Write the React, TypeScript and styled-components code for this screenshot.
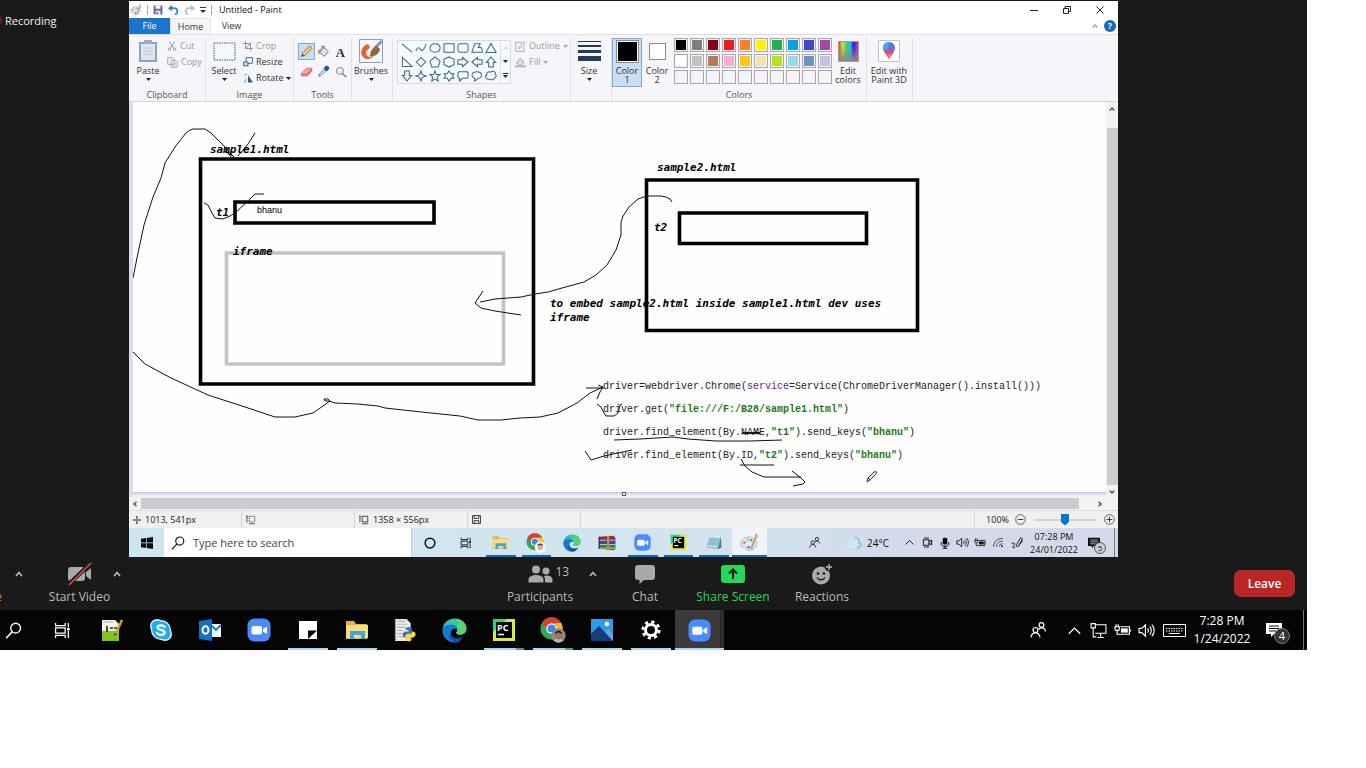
import React from "react";
import styled, { createGlobalStyle, css } from "styled-components";

const GlobalStyle = createGlobalStyle`
  * { box-sizing: border-box; }
  body { margin: 0; background: #fff; font-family: "Open Sans", "Noto Sans", sans-serif; }
  button, input { font: inherit; color: inherit; margin: 0; padding: 0; border: 0; background: none; }
  svg { display: block; flex: none; }
`;

/* ---------- host screen ---------- */
const Desktop = styled.div`padding-right: 59px;`;
const Screen = styled.main`background: #1a1a1a; min-width: 1200px;`;
const Stage = styled.div`display: grid; grid-template-columns: 129px 1fr 189px;`;
const Recording = styled.div`
  display: flex; align-items: center; gap: 3px; height: 18px; margin-top: 11px;
  font-size: 11px; color: #f0f0f0;
`;
const RecordingMark = styled.i`width: 2px; height: 8px; background: #5a1f1f; border-radius: 0 4px 4px 0;`;

/* ---------- Paint window ---------- */
const Shared = styled.section`display: flex; flex-direction: column; min-width: 0; padding-top: 1px; color: #333;`;
const TitleBar = styled.header`
  display: flex; align-items: center; height: 17px; background: #fff; font-size: 9px; color: #111;
`;
const QuickAccess = styled.div`display: flex; align-items: center; gap: 5px; margin-left: 1px;`;
const QuickButton = styled.button`display: flex; height: 14px; align-items: center;`;
const Bar = styled.i`width: 1px; height: 10px; background: #aaa;`;
const Title = styled.h1`margin: 0 0 0 7px; font-size: 9px; font-weight: 400; line-height: 14px;`;
const WindowButtons = styled.div`display: flex; margin-left: auto; padding-right: 2px;`;
const WindowButton = styled.button`width: 33px; height: 14px; display: flex; align-items: center; justify-content: center;`;

const Tabs = styled.nav`display: flex; height: 16px; background: #fff; font-size: 9px;`;
const Tab = styled.button<{ $kind?: "file" | "active" }>`
  width: 41px; line-height: 16px; text-align: center;
  ${(p) => p.$kind === "file" && css`background: #1a76cc; color: #fff;`}
  ${(p) => p.$kind === "active" && css`background: #f6f5f9; border: 1px solid #e4e3e8; border-bottom: 0; line-height: 15px;`}
`;
const TabsEnd = styled.div`display: flex; align-items: center; gap: 6px; margin-left: auto; margin-right: 2px;`;
const Help = styled.button`
  width: 12px; height: 12px; border-radius: 50%; background: #1568b8; color: #fff;
  font-size: 9px; line-height: 12px; font-weight: 700;
`;

const Ribbon = styled.div`
  display: flex; height: 68px; padding: 3px 0 0; background: #f6f5f9;
  border-top: 1px solid #e0dfe4; border-bottom: 1px solid #d6d5da; font-size: 9px; line-height: 10px;
`;
const Group = styled.section<{ $w: number }>`
  display: flex; flex-direction: column; width: ${(p) => p.$w}px; border-right: 1px solid #e2e1e6;
`;
const GroupBody = styled.div<{ $gap?: number; $pad?: number }>`
  display: flex; flex: 1; align-items: flex-start; gap: ${(p) => p.$gap ?? 6}px; padding: 0 0 0 ${(p) => p.$pad ?? 0}px;
`;
const GroupName = styled.h2`margin: 0; height: 12px; font-size: 9px; line-height: 12px; font-weight: 400; text-align: center; color: #555;`;
const BigTool = styled.button<{ $w: number; $on?: boolean }>`
  display: flex; flex-direction: column; align-items: center; width: ${(p) => p.$w}px; height: 49px;
  padding-top: 1px; gap: 3px; line-height: 9px; white-space: pre-line;
  ${(p) => p.$on && css`background: #c9def5; outline: 1px solid #7da7d9; outline-offset: -1px;`}
`;
const BigIcon = styled.span`display: flex; align-items: center; justify-content: center; height: 24px;`;
const SmallTools = styled.div`display: flex; flex-direction: column;`;
const SmallTool = styled.button<{ $off?: boolean }>`
  display: flex; align-items: center; gap: 3px; height: 16px; color: ${(p) => (p.$off ? "#9b9aa0" : "#333")};
`;
const ToolGrid = styled.div`display: grid; grid-template-columns: repeat(3, 17px); grid-auto-rows: 20px; padding-top: 5px;`;
const ToolButton = styled.button<{ $on?: boolean }>`
  display: flex; align-items: center; justify-content: center; height: 17px;
  ${(p) => p.$on && css`background: #c9def5; outline: 1px solid #7da7d9; outline-offset: -1px;`}
`;
const Gallery = styled.div`display: flex; margin-top: 2px; border: 1px solid #d5dbe4; background: #f4fafd;`;
const ShapeGrid = styled.div`display: grid; grid-template-columns: repeat(7, 14px); grid-auto-rows: 14px; padding: 0 2px;`;
const ShapeButton = styled.button`display: flex; align-items: center; justify-content: center;`;
const GalleryScroll = styled.div`
  display: flex; flex-direction: column; justify-content: space-around; align-items: center; width: 10px;
  border-left: 1px solid #dde2ea;
`;
const Swatches = styled.div`display: grid; grid-template-columns: repeat(10, 14px); gap: 2px; padding: 0 0 0 2px;`;
const Swatch = styled.button<{ $c: string }>`
  width: 14px; height: 14px; border: 1px solid #aaa9ad; background: ${(p) => p.$c}; box-shadow: inset 0 0 0 1px #f3f2f6;
`;
const ColorWell = styled.span<{ $c: string; $s: number }>`
  width: ${(p) => p.$s}px; height: ${(p) => p.$s}px; background: ${(p) => p.$c};
  border: 1px solid #8a898e; box-shadow: inset 0 0 0 1px #fff;
`;

/* ---------- drawing area ---------- */
const Workspace = styled.div`display: flex; height: 395px; background: #dcdcec; padding-left: 4px;`;
const Sheet = styled.div`position: relative; flex: 1; min-width: 0; height: 390px; background: #fefefe; overflow: hidden;`;
const SheetColumn = styled.div`display: flex; flex-direction: column; flex: 1; min-width: 0;`;
const SheetShadow = styled.div`
  display: flex; justify-content: center; height: 5px; padding-left: 9px; background: #dbe0ec;
  border-top: 1px solid #c0c9dc; border-bottom: 2px solid #eef0f6;
`;
const Handle = styled.i`width: 4px; height: 4px; margin-top: -1px; background: #fff; border: 1px solid #555;`;
const Label = styled.span<{ $x: number; $y: number; $font?: "code" | "plain" }>`
  position: absolute; left: ${(p) => p.$x}px; top: ${(p) => p.$y}px; white-space: pre; color: #000;
  font: italic 700 11px/14px "DejaVu Sans Mono", monospace;
  ${(p) => p.$font === "code" && css`font: 400 10px/14px "Liberation Mono", monospace; color: #222;`}
  ${(p) => p.$font === "plain" && css`font: 400 9px/14px "Liberation Sans", sans-serif;`}
`;
const Str = styled.b`color: #1a7a1a; font-weight: 700;`;
const Kwarg = styled.span`color: #6a1b93;`;
const VScroll = styled.div`
  display: flex; flex-direction: column; align-items: center; justify-content: space-between; width: 12px;
  padding: 4px 0 2px; background: #f3f2f5;
`;
const VThumb = styled.i`flex: 1; width: 11px; margin: 16px 0 4px; background: #cdcbcf;`;
const HScroll = styled.div`
  display: flex; align-items: center; height: 13px; padding: 0 15px 0 3px; background: #f3f2f5;
`;
const HThumb = styled.i`flex: 1; height: 11px; margin: 0 18px 0 3px; background: #cdcbcf;`;
const Status = styled.footer`
  display: flex; height: 18px; background: #f1eff2; border-top: 1px solid #dcdbe0; font-size: 9px; color: #222;
`;
const StatusCell = styled.div<{ $w?: number }>`
  display: flex; align-items: center; gap: 4px; padding-left: 4px; border-right: 1px solid #d6d5da;
  ${(p) => (p.$w ? css`width: ${p.$w}px;` : css`flex: 1;`)}
`;
const ZoomCell = styled.label`display: flex; align-items: center; gap: 6px; padding: 0 3px 0 11px;`;
const Range = styled.input`
  appearance: none; width: 62px; height: 14px; margin: 0 2px;
  &::-webkit-slider-runnable-track { height: 2px; background: #d3d2d6; }
  &::-webkit-slider-thumb {
    appearance: none; width: 8px; height: 12px; margin-top: -5px; background: #0a74d0;
    clip-path: polygon(0 0, 100% 0, 100% 70%, 50% 100%, 0 70%);
  }
`;

/* ---------- presenter's taskbar ---------- */
const InnerBar = styled.nav`
  display: flex; height: 29px; color: #111;
  background: linear-gradient(90deg, #cde7f1 0, #d3e4ee 55%, #d2daeb 80%, #d6d9ea);
`;
const InnerApps = styled.div`display: grid; grid-template-columns: repeat(8, 1fr); width: 284px; flex: none;`;
const InnerButton = styled.button<{ $w?: number; $run?: boolean; $on?: boolean }>`
  position: relative; display: flex; align-items: center; justify-content: center; flex: none;
  ${(p) => p.$w && css`width: ${p.$w}px;`}
  ${(p) => p.$on && css`background: #edf3f9;`}
  ${(p) => p.$run && css`&::after { content: ""; position: absolute; left: 3px; right: 3px; bottom: 0; height: 2px; background: #0b69b5; }`}
  ${(p) => p.$on && css`&::after { left: 0; right: 0; }`}
`;
const SearchBox = styled.label`
  display: flex; align-items: center; gap: 8px; width: 248px; padding-left: 7px; background: #fff; border-right: 1px solid #c5d0d6;
`;
const SearchInput = styled.input`
  flex: 1; min-width: 0; font-size: 11px; outline: none;
  &::placeholder { color: #444; opacity: 1; }
`;
const Tray = styled.div`display: flex; align-items: center; margin-left: auto;`;
const TrayButton = styled.button<{ $w: number }>`
  display: flex; align-items: center; justify-content: center; gap: 5px; width: ${(p) => p.$w}px; height: 100%; flex: none;
`;
const Temp = styled.span`font-size: 10px; line-height: 14px;`;
const InnerClock = styled.time`width: 54px; text-align: center; font-size: 9px; line-height: 13px; white-space: nowrap;`;
const Count = styled.span<{ $dark?: boolean }>`
  position: absolute; right: ${(p) => (p.$dark ? -8 : -6)}px; bottom: ${(p) => (p.$dark ? -6 : -5)}px; width: ${(p) => (p.$dark ? 16 : 12)}px;
  height: ${(p) => (p.$dark ? 16 : 12)}px; border-radius: 50%; text-align: center;
  font-size: ${(p) => (p.$dark ? 11 : 8)}px; line-height: ${(p) => (p.$dark ? 14 : 10)}px;
  border: 1px solid ${(p) => (p.$dark ? "#777" : "#555")}; background: ${(p) => (p.$dark ? "#333" : "#c9cfdc")};
  color: ${(p) => (p.$dark ? "#fff" : "#111")};
`;
const Badged = styled.span`position: relative; display: flex;`;

/* ---------- meeting toolbar ---------- */
const Meeting = styled.nav`
  display: grid; grid-template-columns: 1fr auto 1fr; height: 53px; padding-top: 4px; color: #b9b9b9; font-size: 12px;
`;
const MeetingGroup = styled.div<{ $center?: boolean; $end?: boolean }>`
  display: flex; align-items: flex-start;
  ${(p) => p.$center && css`padding-left: 55px;`}
  ${(p) => p.$end && css`justify-content: flex-end; padding: 9px 12px 0 0;`}
`;
const MeetingButton = styled.button<{ $w: number; $share?: boolean; $l?: number }>`
  display: flex; flex-direction: column; align-items: center; width: ${(p) => p.$w}px; flex: none;
  margin-left: ${(p) => p.$l ?? 0}px; gap: 1px;
  line-height: 18px; white-space: nowrap; ${(p) => p.$share && css`color: #23d959;`}
`;
const MuteEdge = styled.button`
  display: flex; justify-content: flex-end; width: 2px; overflow: hidden; padding-top: 27px; line-height: 18px; color: #c77d3a;
`;
const MeetingIcon = styled.span`position: relative; display: flex; align-items: center; height: 26px;`;
const People = styled.span`position: absolute; left: 28px; top: 2px; font-size: 12px; line-height: 18px;`;
const Caret = styled.button<{ $l: number }>`display: flex; width: 8px; height: 26px; align-items: center; margin-left: ${(p) => p.$l}px;`;
const Leave = styled.button`
  width: 61px; height: 27px; border-radius: 7px; background: #b92626; color: #fff; font-weight: 600; font-size: 12px;
`;

/* ---------- host taskbar ---------- */
const HostBar = styled.nav`display: flex; height: 40px; background: #050505; color: #fff;`;
const HostButton = styled.button<{ $run?: boolean; $many?: boolean; $on?: boolean; $first?: boolean }>`
  position: relative; display: flex; align-items: center; justify-content: center; width: 49px; flex: none;
  ${(p) => p.$first && css`width: 38px; justify-content: flex-start; padding-left: 5px;`}
  ${(p) => p.$run && css`&::after { content: ""; position: absolute; left: 5px; right: 4px; bottom: 0; height: 2px;
    background: ${p.$many ? "linear-gradient(90deg, #a9d9f5 80%, #6f8b9b 80%)" : "#a9d9f5"}; }`}
  ${(p) => p.$on && css`background: linear-gradient(90deg, #3b3b3b 92%, #232323 92%, #2e2e2e 94%); &::after { left: 0; right: 0; }`}
`;
const HostClock = styled.time`width: 64px; text-align: center; font-size: 12px; line-height: 18px; white-space: nowrap;`;
const ShowDesktop = styled.button<{ $l: number }>`width: 4px; height: 100%; margin-left: ${(p) => p.$l}px; border-left: 1px solid #777;`;

/* ---------- icons ---------- */
type IconProps = { s?: number; h?: number; vb?: string; children?: React.ReactNode };
const Icon = ({ s = 16, h, vb = "0 0 16 16", children }: IconProps) => (
  <svg width={s} height={h ?? s} viewBox={vb} fill="none" aria-hidden="true">{children}</svg>
);
const Down = ({ c = "#222" }: { c?: string }) => <Icon s={5} h={3} vb="0 0 5 3"><path d="M0 0h5L2.500 3z" fill={c} /></Icon>;
const Chevron = ({ d = "up", c = "#444", s = 6 }: { d?: "up" | "down" | "left" | "right"; c?: string; s?: number }) => (
  <Icon s={s} vb="0 0 8 8">
    <path stroke={c} strokeWidth="1.600" d={{ up: "M1 6l3-3.500L7 6", down: "M1 2l3 3.500L7 2", left: "M6 1L2.500 4 6 7", right: "M2 1l3.500 3L2 7" }[d]} />
  </Icon>
);
const Search = ({ s }: { s: number }) => (
  <Icon s={s}><circle cx="10" cy="5.800" r="4.600" stroke="currentColor" strokeWidth="1.300" /><path d="M6.700 9.300L1 15.300" stroke="currentColor" strokeWidth="1.400" /></Icon>
);
const TaskView = ({ s }: { s: number }) => (
  <Icon s={s}><path stroke="currentColor" strokeWidth="1.200" d="M1.500 1v2.500h9V1M1.500 15v-2.500h9V15M1.500 5.500h9v5h-9zM13.500 1v4M13.500 8.500V15" /><path fill="currentColor" d="M12.300 5.500h2.400V8h-2.400z" /></Icon>
);
const PeopleIcon = ({ s }: { s: number }) => (
  <Icon s={s}><g stroke="currentColor" strokeWidth="1.200"><circle cx="5.500" cy="8" r="2.500" /><path d="M1 15.500c.3-3 2-4.700 4.500-4.700s4.200 1.700 4.500 4.700" /><circle cx="11.500" cy="3" r="2.400" /><path d="M8.500 7.500c2.500-3 6.500-1.800 7 2" /></g></Icon>
);
const Folder = ({ s }: { s: number }) => (
  <Icon s={s} vb="0 0 24 22"><path d="M1 2h8l2 3h11v15H1z" fill="#e9b23f" /><path d="M1 6h22v13H1z" fill="#fbdc7d" /><path d="M5 12h15v8h-4v-4H9v4H5z" fill="#3ea7dc" /></Icon>
);
const Edge = ({ s }: { s: number }) => (
  <Icon s={s} vb="0 0 24 24">
    <path d="M.5 11C1.200 4.500 6 .5 12 .5c7 0 11.500 4.500 11.500 9.500 0 4-3 6-6.500 6-2 0-3.500-.8-3.500-1.800 0-.8 1-1 1-3C14.500 8.500 12 7 9 7 5 7 1.500 8.500.5 11z" fill="#35c1b0" />
    <path d="M14 .7c6 1 9.500 5 9.500 9.300 0 4-3 6-6.500 6-2 0-3.500-.8-3.500-1.800 2-1 2-3 1-5z" fill="#62d563" opacity=".75" />
    <path d="M.4 12C.4 8.500 4 6.500 8 6.500c3.500 0 6.500 2 6.500 4.800C13.500 9.500 8.500 9.500 8.500 15c0 5 5 7.500 9.500 6.500-2 1.500-4 2-6 2C5 23.500.4 18 .4 12z" fill="#1479d0" />
    <path d="M8.500 14c0 5 5.500 7 12 4-1 2-3.500 4.500-7 5C8 22.500 5.500 18 8.500 14z" fill="#0c4f9c" />
  </Icon>
);
const ZoomLogo = ({ s }: { s: number }) => (
  <Icon s={s} vb="0 0 24 24"><rect x=".5" y=".5" width="23" height="23" rx="7" fill="#4a8cff" /><rect x="4.500" y="8" width="10.500" height="8.500" rx="2" fill="#fff" /><path d="M16 11l4-2.500v7.500l-4-2.500z" fill="#fff" /></Icon>
);
const PyCharm = ({ s }: { s: number }) => (
  <Icon s={s} vb="0 0 24 24">
    <path d="M1 1h22v22H1z" fill="#d8ea3a" /><path d="M1 1h14L1 14z" fill="#21d789" /><path d="M4 4h16v16H4z" fill="#000" />
    <text x="5" y="13" fontSize="9" fontWeight="700" fill="#fff" fontFamily="Open Sans, sans-serif">PC</text><path d="M6 16.500h6" stroke="#fff" strokeWidth="1.500" />
  </Icon>
);
const Chrome = ({ s, dark }: { s: number; dark?: boolean }) => (
  <Icon s={s} vb="0 0 26 26">
    <circle cx="11.500" cy="11.500" r="11" fill="#31a852" /><path d="M1.900 6A11 11 0 0 1 21.100 6H11.500L8 13z" fill="#e33b2e" /><path d="M21.100 6a11 11 0 0 1-9.600 16.500L17 11l-2-5z" fill="#fbc116" />
    <circle cx="11.500" cy="11.500" r="5.200" fill="#fff" /><circle cx="11.500" cy="11.500" r="4" fill="#4285f4" />
    <circle cx="18.500" cy="18.500" r="7.200" fill={dark ? "#8d8785" : "#f4f4f4"} /><path d="M13.500 23.500c1-2.500 9-2.500 10 0a7 7 0 0 1-10 0z" fill={dark ? "#b8b5b2" : "#fff"} />
    <ellipse cx="18.500" cy="18.500" rx="3.200" ry="4" fill={dark ? "#9b7360" : "#e7a985"} /><path d="M15 17.500c-.5-5 7.500-5 7 0-1-2.500-5.500-3-7 0z" fill="#161616" />
  </Icon>
);
const Speaker = ({ s }: { s: number }) => (
  <Icon s={s}><path stroke="currentColor" strokeWidth="1.100" d="M1 6h2.500L7 2.700v10.600L3.500 10H1zM9 6c1 1 1 3 0 4M11 4.200c2 2 2 5.600 0 7.600M13 2.500c3 3 3 8 0 11" /></Icon>
);
const Battery = ({ s }: { s: number }) => (
  <Icon s={s}><path stroke="currentColor" strokeWidth="1.100" d="M6 4.500h8.500v7H5M15.500 7v2M1 4.500h4v2c0 2-4 2-4 0zM2 4.500V2M4 4.500V2M3 8v3.500h2" /><path d="M6.500 6h6.500v4H6.500z" fill="currentColor" /></Icon>
);
const Note = ({ s, line }: { s: number; line: string }) => (
  <Icon s={s}><path d="M0 1h16v11H8l-3 3v-3H0z" fill="currentColor" /><path d="M3 4h10M3 6.500h10M3 9h7" stroke={line} /></Icon>
);
const Palette = ({ s }: { s: number }) => (
  <Icon s={s} vb="0 0 24 24">
    <path d="M11 5C4 5 .5 10 1 15c.4 3.500 3.500 3 5 3s1 4 5 4c6 0 10-4 10-9s-4-8-10-8z" fill="#dfe6ee" stroke="#9fb0c2" />
    <circle cx="5.500" cy="12" r="1.600" fill="#de6a4c" /><circle cx="9.500" cy="8.500" r="1.600" fill="#e0b84c" /><circle cx="14" cy="9" r="1.600" fill="#6ea85f" /><circle cx="11" cy="18" r="1.700" fill="#4b7fc4" />
    <path d="M21 2L14 20" stroke="#c39a6a" strokeWidth="2.400" /><path d="M19 1h3v6l-3-.5z" fill="#dfae72" />
  </Icon>
);
const Floppy = ({ c }: { c: string }) => (
  <Icon s={10}><path d="M1 1h14v14H1z" fill={c} /><path d="M4 1h8v5H4z" fill="#fff" /><path d="M4 9h8v6H4z" fill="#e3def3" /><path d="M6 11h2v4H6z" fill={c} /></Icon>
);

/* ---------- data ---------- */
const palette = [
  "#000000", "#7f7f7f", "#880015", "#ed1c24", "#ff7f27", "#fff200", "#22b14c", "#00a2e8", "#3f48cc", "#a349a4",
  "#ffffff", "#c3c3c3", "#b97a57", "#ffaec9", "#ffc90e", "#efe4b0", "#b5e61d", "#99d9ea", "#7092be", "#c8bfe7",
  ...Array(10).fill("#f6f5f9"),
];
const shapes: [string, string][] = [
  ["Line", "M1 2l11 9"], ["Curve", "M1 10c1-4 3-5 5-2s4 0 6-6"], ["Oval", "M1 6.500c0-6 11-6 11 0s-11 6-11 0z"], ["Rectangle", "M1 2h11v9H1z"],
  ["Rounded rectangle", "M3 2h7q2 0 2 2v5q0 2-2 2H3q-2 0-2-2V4q0-2 2-2z"], ["Polygon", "M4 2h6L8 6h3l2 5H1z"], ["Triangle", "M6.500 1.500l5.500 10H1z"],
  ["Right triangle", "M1.500 1.500v10H12z"], ["Diamond", "M6.500 1.500l5 5-5 5-5-5z"], ["Pentagon", "M6.500 1l5.500 4.500-2 6.500H3L1 5.500z"], ["Hexagon", "M6.500 1L12 3.700v5.600L6.500 12 1 9.300V3.700z"],
  ["Right arrow", "M1 4h5V1.500l6 5-6 5V9H1z"], ["Left arrow", "M12 4H7V1.500l-6 5 6 5V9h5z"], ["Up arrow", "M4 12V7H1.500l5-6 5 6H9v5z"],
  ["Down arrow", "M4 1v5H1.500l5 6 5-6H9V1z"], ["Four-point star", "M6.500 1L8 5l4 1.500L8 8l-1.500 4L5 8 1 6.500 5 5z"],
  ["Five-point star", "M6.500 1l1.500 4h4L9 7.500l1 4.500-3.500-2.500L3 12l1-4.500L1 5h4z"], ["Six-point star", "M6.500 1l2 3H12l-2 2.500L12 9H8.500l-2 3-2-3H1l2-2.500L1 4h3.500z"],
  ["Rounded callout", "M2 2h9l1 1v5l-1 1H6l-3 3V9H2L1 8V3z"], ["Oval callout", "M4 9C-1 7 1 2 6.500 2s7 6 1 7.300L4 12z"], ["Cloud callout", "M3 10C0 9 0 6 2 5.500 1 3 4 1 6 2.500 8 0 12 2 11 4.500c2 1.500 1 4-1 4.500-1 2-3 2-4.500 1z"],
];
const strokes = [
  "M133 278L138 253 144 225 153 197 161 178 165 163 175 147 186 133Q189 130 193 129H205L211 133 225 147 234 157",
  "M255 133L248 144 238 156M225 149L231 157M224 151L233 156",
  "M204 203L208 205 212 213 215 218 223 219 230 216 235 213 248 201 255 194H264",
  "M672 202L670 199 666 197 661 196H647L638 199 629 207 623 216 621 222V235L619 241 616 250 607 265 596 275 584 282 562 288 548 292 535 294 521 297 495 299 485 301 480 302",
  "M483 291L475 303 481 308 495 311 521 315",
  "M133 352L145 364 171 378 208 395 245 407 275 417 295 417 313 413 323 406 330 401 328 399H324L325 401 329 401 335 403 358 404 378 406 385 408 431 413 460 416 478 420H501L520 418 540 417 558 413 577 403 590 393 603 387",
  "M586 388H604M597 399L600 392 603 387 598 385",
  "M597 404L601 407 604 413 606 416H614L618 413 620 405 622 404",
  "M614 440L640 439 673 437 688 439 716 441H750L782 440",
  "M585 451L591 460 604 456 618 453 632 450",
  "M740 465H774M741 459L745 466 752 472 764 477H801",
  "M792 471L801 478 805 482 803 484 793 486",
];

const innerApps: [string, React.ReactNode, boolean, boolean?][] = [
  ["File Explorer", <Folder s={17} />, true],
  ["Chrome", <Chrome s={20} />, true],
  ["Edge", <Edge s={18} />, false],
  ["WinRAR", <Icon s={18}><path d="M1 2.500l13-1 1.500 2V6H1z" fill="#8b2c55" /><path d="M1 6h14.500v3.500H1z" fill="#3d4796" /><path d="M1 9.500h14.500V13L14 14.500 1 13z" fill="#3c7a42" /><path d="M1 5.500h14M1 9.300h14M1 12.500h14" stroke="#e0d9ce" strokeWidth=".7" /><path d="M8 1.500h2v13H8z" fill="#c98d3a" /><path d="M1 2.500V13" stroke="#222" /></Icon>, false],
  ["Zoom", <ZoomLogo s={17} />, true],
  ["PyCharm", <PyCharm s={17} />, true],
  ["Notepad", <Icon s={17}><path d="M5 1l10 1-3 12-11-1z" fill="#8cc3cf" /><path d="M5 1l10 1-.5 2L4.300 3z" fill="#d7eef2" /><path d="M15 2l.5 11L12 14z" fill="#587a86" /><path d="M2 11l9 1" stroke="#d9f0f4" /></Icon>, true],
  ["Paint", <Palette s={19} />, true, true],
];

const hostApps: [string, React.ReactNode, { run?: boolean; many?: boolean; on?: boolean }][] = [
  ["Notepad++", <Icon s={24} vb="0 0 24 24"><path d="M2 2h13l4 4v17H2z" fill="#f4f8e8" /><path d="M2 13h17v10H2z" fill="#7cc522" /><path d="M3 4h10" stroke="#9ab" /><path d="M7 8v6M10 10h3M14 10h3" stroke="#222" strokeWidth="1.600" /><path d="M22 2l-6 13" stroke="#d49a34" strokeWidth="2.600" /><path d="M15 15l-1 3 3-2z" fill="#333" /></Icon>, {}],
  ["Skype", <Icon s={24} vb="0 0 24 24"><circle cx="8" cy="8" r="7" fill="#e9f8ff" /><circle cx="16" cy="16" r="7" fill="#e9f8ff" /><circle cx="12" cy="12" r="10" fill="#e9f8ff" /><circle cx="8" cy="8" r="5.600" fill="#1eaeea" /><circle cx="16" cy="16" r="5.600" fill="#1eaeea" /><circle cx="12" cy="12" r="8.800" fill="#1eaeea" /><path d="M15.500 9c-1-2-7-2.300-7 .5 0 3 7.200 1.800 7.200 5 0 3-6.600 3-7.700.3" stroke="#fff" strokeWidth="2.200" strokeLinecap="round" /></Icon>, {}],
  ["Outlook", <Icon s={24} vb="0 0 24 24"><path d="M12 6h11v13H12z" fill="#f4f9ff" /><path d="M14 8l4 4 5-5" stroke="#1b74c5" strokeWidth="1.800" /><path d="M1 3l13-2v22L1 21z" fill="#1270c4" /><ellipse cx="7.500" cy="12" rx="3" ry="3.800" stroke="#fff" strokeWidth="2" /></Icon>, {}],
  ["Zoom", <ZoomLogo s={24} />, {}],
  ["Sticky Notes", <Icon s={18} vb="0 0 18 18"><path d="M0 0h18v18H0z" fill="#fff" /><path d="M9 18V9.500h9z" fill="#050505" /></Icon>, { run: true }],
  ["File Explorer", <Folder s={24} />, { run: true }],
  ["Python", <Icon s={25} vb="0 0 24 24"><path d="M2 1h11l4 4v17H2z" fill="#ececec" /><path d="M4 3h8M4 6h10M4 9h8M4 12h6M4 15h6M4 18h6" stroke="#b5b5b5" /><path d="M2 2v20" stroke="#444" strokeDasharray="1 1" strokeWidth="1.500" /><path d="M12 11c0-3 6-3 6 0v3c0 2-6 1-6 3v2c-4 0-3-6 0-6h3v-1z" fill="#3a77ab" /><path d="M18 13c5-1 5 6 0 6h-2v1h2c0 4-6 3-6 0v-2c0-3 6-1 6-4z" fill="#ffd43d" /></Icon>, {}],
  ["Edge", <Edge s={25} />, {}],
  ["PyCharm", <PyCharm s={24} />, { run: true, many: true }],
  ["Chrome", <Chrome s={26} dark />, { run: true, many: true }],
  ["Photos", <Icon s={24} vb="0 0 24 24"><path d="M1 1h22v22H1z" fill="#2f9be6" /><path d="M13 17l5-6 5 6v6H11z" fill="#6fa2e2" /><path d="M1 16l8-8 14 15H1z" fill="#173c7d" /><circle cx="17" cy="6" r="2.300" fill="#fff" /></Icon>, { run: true }],
  ["Settings", <Icon s={20} vb="0 0 20 20"><circle cx="10" cy="10" r="5.500" stroke="#fff" strokeWidth="3" /><circle cx="10" cy="10" r="8.200" stroke="#fff" strokeWidth="2.800" strokeDasharray="3.200 3.240" /></Icon>, { run: true }],
  ["Zoom Meeting", <ZoomLogo s={23} />, { run: true, on: true }],
];

/* ---------- sections ---------- */
const PaintRibbon = () => (
  <Ribbon>
    <Group $w={77}>
      <GroupBody $gap={5} $pad={5}>
        <BigTool $w={28}><BigIcon><Icon s={20} h={24} vb="0 0 20 24"><path d="M1 3h18v20H1z" fill="#8ba2c2" /><path d="M3 5h14v16H3z" fill="#dde7f3" /><path d="M6 1h8v4H6z" fill="#9caec4" /><path d="M5 9h10M5 12h10M5 15h10" stroke="#b9c8dc" /></Icon></BigIcon>Paste<Down /></BigTool>
        <SmallTools>
          <SmallTool $off><Icon s={10}><path d="M4 1l6 10M12 1L6 11" stroke="#8d98a8" strokeWidth="1.500" /><circle cx="4" cy="13" r="2" stroke="#8d98a8" strokeWidth="1.500" /><circle cx="12" cy="13" r="2" stroke="#8d98a8" strokeWidth="1.500" /></Icon>Cut</SmallTool>
          <SmallTool $off><Icon s={11}><path d="M1 1h7l2 2v8H1zM6 5h7l2 2v8H6z" fill="#eef1f7" stroke="#a3b1cb" strokeWidth="1.400" /><path d="M8 9h5M8 12h5" stroke="#a3b1cb" /></Icon>Copy</SmallTool>
        </SmallTools>
      </GroupBody>
      <GroupName>Clipboard</GroupName>
    </Group>
    <Group $w={88}>
      <GroupBody $gap={5} $pad={4}>
        <BigTool $w={28}><BigIcon><Icon s={23} h={19} vb="0 0 23 19"><path d="M1 1h21v17H1z" stroke="#33597c" strokeDasharray="1.500 1" fill="#f4f7fb" /></Icon></BigIcon>Select<Down /></BigTool>
        <SmallTools>
          <SmallTool $off><Icon s={10}><path d="M4 0v12h12M0 4h12v12M4 12l9-9" stroke="#8694a8" strokeWidth="1.500" /></Icon>Crop</SmallTool>
          <SmallTool><Icon s={10}><path d="M5 1h10v9H5z" fill="#fff" stroke="#2a5f93" strokeWidth="1.500" /><path d="M1 8h7v6H1z" fill="#cfe3f5" stroke="#2a5f93" strokeWidth="1.500" /></Icon>Resize</SmallTool>
          <SmallTool><Icon s={10}><path d="M8 3v12h8z" fill="#2a5f93" /><path d="M6 7v8H0z" fill="#a7c6e2" /><path d="M2 5c1-3 4-3 5-3" stroke="#2a5f93" /></Icon>Rotate <Down /></SmallTool>
        </SmallTools>
      </GroupBody>
      <GroupName>Image</GroupName>
    </Group>
    <Group $w={58}>
      <GroupBody $pad={4}>
        <ToolGrid>
          <ToolButton $on aria-label="Pencil"><Icon s={13}><path d="M2 14l1-4L12 1l3 3-9 9z" fill="#f5c874" stroke="#8a6231" /><path d="M2 14l1-3 2 2z" fill="#333" /></Icon></ToolButton>
          <ToolButton aria-label="Fill with color"><Icon s={13}><path d="M8 2l6 6-5 6-6-5z" fill="#dbe4ee" stroke="#586d88" /><path d="M6 7V1.500h3V5" stroke="#586d88" /><path d="M1 10c0-4 2-5 5-5L3 11z" fill="#e08654" /></Icon></ToolButton>
          <ToolButton aria-label="Text"><Icon s={12}><text x="1" y="14" fontSize="17" fontWeight="700" fontFamily="Liberation Serif, serif" fill="#1f2f45">A</text></Icon></ToolButton>
          <ToolButton aria-label="Eraser"><Icon s={13}><path d="M1 11l7-7h7l-6 7z" fill="#f6a3a6" stroke="#c96a70" /><path d="M1 11h8v3H1z" fill="#e37980" /><path d="M9 11l6-7v3l-6 7z" fill="#cf636c" /></Icon></ToolButton>
          <ToolButton aria-label="Color picker"><Icon s={13}><path d="M2 14l1-3 6-6 2 2-6 6z" fill="#d6e6f2" stroke="#4c6a86" /><path d="M8 4l4 4 3-3c1-2-2-5-4-4z" fill="#22598f" /></Icon></ToolButton>
          <ToolButton aria-label="Magnifier"><Icon s={12}><circle cx="6.500" cy="6.500" r="4.500" fill="#e8f1f8" stroke="#8c98a5" strokeWidth="1.600" /><path d="M10 10l5 5" stroke="#a97642" strokeWidth="2.200" /></Icon></ToolButton>
        </ToolGrid>
      </GroupBody>
      <GroupName>Tools</GroupName>
    </Group>
    <Group $w={41}>
      <GroupBody $pad={1}>
        <BigTool $w={36}><BigIcon><Icon s={24} vb="0 0 24 24"><path d="M.5.5h23v23H.5z" fill="#f4f7fa" stroke="#8ba2b4" /><path d="M9 5C3 6 0 14 4 18c4 4 9 2 11-2-4 3-8 2-8-2 0-3 3-3 4-6z" fill="#e2653a" /><path d="M23 2l-7 7" stroke="#8a96a3" strokeWidth="3" /><path d="M18 7c-4 1-7 5-7 10 5 1 9-2 10-7z" fill="#8a6a4e" /></Icon></BigIcon>Brushes<Down /></BigTool>
      </GroupBody>
    </Group>
    <Group $w={178}>
      <GroupBody $gap={4} $pad={4}>
        <Gallery>
          <ShapeGrid>
            {shapes.map(([name, d]) => (
              <ShapeButton key={name} aria-label={name}><Icon s={12} vb="0 0 13 13"><path d={d} stroke="#3c6785" strokeWidth="1.100" /></Icon></ShapeButton>
            ))}
          </ShapeGrid>
          <GalleryScroll><Chevron s={4} c="#aaa" /><Down /><Icon s={5} h={5} vb="0 0 5 5"><path d="M0 .5h5" stroke="#222" /><path d="M0 2h5L2.500 5z" fill="#222" /></Icon></GalleryScroll>
        </Gallery>
        <SmallTools>
          <SmallTool $off><Icon s={11}><path d="M1 2h9M1 2v13h12V8M5 11l1-3 7-7 2 2-7 7z" stroke="#a2a9b3" strokeWidth="1.300" /></Icon>Outline <Down c="#aaa" /></SmallTool>
          <SmallTool $off><Icon s={11}><path d="M2 8l6-6 5 6-6 5z" stroke="#8fa0bb" strokeWidth="1.300" fill="#d9e0ec" /><path d="M0 12h16v3H0z" fill="#aab8d0" /></Icon>Fill <Down c="#aaa" /></SmallTool>
        </SmallTools>
      </GroupBody>
      <GroupName>Shapes</GroupName>
    </Group>
    <Group $w={41}>
      <GroupBody $pad={3}>
        <BigTool $w={30}><BigIcon><Icon s={23} h={20} vb="0 0 23 20"><path fill="#23395d" d="M0 0h23v1H0zM0 4h23v2H0zM0 9h23v3H0zM0 15h23v5H0z" /></Icon></BigIcon>Size<Down /></BigTool>
      </GroupBody>
    </Group>
    <Group $w={255}>
      <GroupBody $gap={0}>
        <BigTool $w={30} $on><BigIcon><ColorWell $c="#000" $s={23} /></BigIcon>{"Color\n1"}</BigTool>
        <BigTool $w={30}><BigIcon><ColorWell $c="#fff" $s={17} /></BigIcon>{"Color\n2"}</BigTool>
        <Swatches>{palette.map((c, i) => <Swatch key={i} $c={c} aria-label={`Color ${c}`} />)}</Swatches>
        <BigTool $w={32}><BigIcon>
          <svg width="21" height="21" viewBox="0 0 21 21" aria-hidden="true">
            <defs>
              <linearGradient id="hue"><stop offset="0" stopColor="#d33" /><stop offset=".2" stopColor="#dd3" /><stop offset=".4" stopColor="#3d6" /><stop offset=".6" stopColor="#2bd" /><stop offset=".75" stopColor="#22d" /><stop offset="1" stopColor="#e3a" /></linearGradient>
              <linearGradient id="fade" x2="0" y2="1"><stop offset=".2" stopColor="#888" stopOpacity="0" /><stop offset="1" stopColor="#888" /></linearGradient>
            </defs>
            <path d="M.5.5h20v20H.5z" fill="url(#hue)" stroke="#999" /><path d="M1 1h19v19H1z" fill="url(#fade)" />
          </svg>
        </BigIcon>{"Edit\ncolors"}</BigTool>
      </GroupBody>
      <GroupName>Colors</GroupName>
    </Group>
    <Group $w={46}>
      <GroupBody>
        <BigTool $w={44}><BigIcon><Icon s={22} vb="0 0 22 22"><path d="M.5.5h21v21H.5z" fill="#fff" stroke="#c3c2c8" /><path d="M11 2c4 0 6 3 6 6 0 4-4 7-6 11C10 15 5 12 5 8c0-3 2-6 6-6z" fill="#6a6fe0" /><path d="M5 8c0-3 2-6 6-6l-2 9z" fill="#2fb3f0" /><path d="M6 11l5-2 5 2c-1 3-4 5-5 8-1-3-4-5-5-8z" fill="#e0487d" /><path d="M9 14h4l-2 5z" fill="#e98a2d" /></Icon></BigIcon>{"Edit with\nPaint 3D"}</BigTool>
      </GroupBody>
    </Group>
  </Ribbon>
);

const Drawing = () => (
  <Sheet>
    <svg width="973" height="390" viewBox="133 102 973 390" fill="none" role="img" aria-label="Frames sketch">
      <g stroke="#000" strokeWidth="3.600">
        <path d="M200.500 159h333v225h-333zM235 202h199v21H235zM646.500 180h271v150.500h-271zM679.500 213h187v30.500h-187z" />
        <path d="M226.500 253h277v111h-277z" stroke="#c3c3c3" />
      </g>
      <g stroke="#111" strokeWidth="1">{strokes.map((d) => <path key={d} d={d} />)}</g>
      <path d="M742 433h18" stroke="#111" strokeWidth="2" />
      <path d="M867 482l1-4 6-6 2-.5.5 2-6 6zM868 478l2.500 2" stroke="#333" fill="#eee" />
    </svg>
    <Label $x={77} $y={41}>sample1.html</Label>
    <Label $x={83} $y={104}>t1</Label>
    <Label $x={124} $y={101} $font="plain">bhanu</Label>
    <Label $x={100} $y={143}>iframe</Label>
    <Label $x={524} $y={59}>sample2.html</Label>
    <Label $x={521} $y={119}>t2</Label>
    <Label $x={417} $y={195}>{"to embed sample2.html inside sample1.html dev uses\niframe"}</Label>
    <Label $x={470} $y={278} $font="code">driver=webdriver.Chrome(<Kwarg>service</Kwarg>=Service(ChromeDriverManager().install()))</Label>
    <Label $x={470} $y={301} $font="code">driver.get(<Str>"file:///F:/B28/sample1.html"</Str>)</Label>
    <Label $x={470} $y={324} $font="code">driver.find_element(By.NAME,<Str>"t1"</Str>).send_keys(<Str>"bhanu"</Str>)</Label>
    <Label $x={470} $y={347} $font="code">driver.find_element(By.ID,<Str>"t2"</Str>).send_keys(<Str>"bhanu"</Str>)</Label>
  </Sheet>
);

const PaintWindow = () => (
  <Shared>
    <TitleBar>
      <QuickAccess>
        <Palette s={12} /><Bar />
        <QuickButton aria-label="Save"><Floppy c="#6a5aa8" /></QuickButton>
        <QuickButton aria-label="Undo"><Icon s={11}><path d="M3 6h6c6 0 6 8 1 9" stroke="#2f86cf" strokeWidth="2.600" /><path d="M0 6l6-5v10z" fill="#2f86cf" /></Icon></QuickButton>
        <QuickButton aria-label="Redo"><Icon s={11}><path d="M13 6H7C1 6 1 14 6 15" stroke="#b9c2cc" strokeWidth="2.600" /><path d="M16 6l-6-5v10z" fill="#b9c2cc" /></Icon></QuickButton>
        <QuickButton aria-label="Customize"><Icon s={6} vb="0 0 6 6"><path d="M0 .5h6" stroke="#333" /><path d="M0 3h6L3 6z" fill="#333" /></Icon></QuickButton>
        <Bar />
      </QuickAccess>
      <Title>Untitled - Paint</Title>
      <WindowButtons>
        <WindowButton aria-label="Minimize"><Icon s={8} vb="0 0 8 8"><path d="M0 4.500h8" stroke="#222" /></Icon></WindowButton>
        <WindowButton aria-label="Restore"><Icon s={8} vb="0 0 8 8"><path d="M.5 2.500h5v5h-5zM2 2V.5h5.500v5H6" stroke="#222" /></Icon></WindowButton>
        <WindowButton aria-label="Close"><Icon s={8} vb="0 0 8 8"><path d="M.5.5l7 7M7.500.5l-7 7" stroke="#222" /></Icon></WindowButton>
      </WindowButtons>
    </TitleBar>
    <Tabs>
      <Tab $kind="file">File</Tab><Tab $kind="active">Home</Tab><Tab>View</Tab>
      <TabsEnd><Chevron c="#999" /><Help aria-label="Help">?</Help></TabsEnd>
    </Tabs>
    <PaintRibbon />
    <Workspace>
      <SheetColumn><Drawing /><SheetShadow><Handle /></SheetShadow></SheetColumn>
      <VScroll><Chevron /><VThumb /><Chevron d="down" /></VScroll>
    </Workspace>
    <HScroll><Chevron d="left" /><HThumb /><Chevron d="right" /></HScroll>
    <Status>
      <StatusCell $w={113}><Icon s={8}><path d="M8 0v16M0 8h16" stroke="#333" strokeWidth="1.600" /><path d="M6 3l2-3 2 3zM6 13l2 3 2-3zM3 6L0 8l3 2zM13 6l3 2-3 2z" fill="#333" /></Icon>1013, 541px</StatusCell>
      <StatusCell $w={113}><Icon s={10}><path d="M5 2h9v9H5z" stroke="#333" strokeWidth="1.400" strokeDasharray="2 1.500" /><path d="M1.500 12V2M0 3l1.500-2L3 3M5 14h9" stroke="#333" strokeWidth="1.300" /></Icon></StatusCell>
      <StatusCell $w={113}><Icon s={10}><path d="M5 2h9v9H5z" stroke="#333" strokeWidth="1.400" /><path d="M1.500 12V2M0 3l1.500-2L3 3M5 14h10" stroke="#333" strokeWidth="1.300" /></Icon>1358 × 556px</StatusCell>
      <StatusCell $w={113}><Icon s={9}><path d="M1 1h14v14H1zM4 1v5h8V1M4 15v-5h8v5" stroke="#333" strokeWidth="1.700" /></Icon></StatusCell>
      <StatusCell />
      <ZoomCell>100%
        <Icon s={11}><circle cx="8" cy="8" r="7" stroke="#555" strokeWidth="1.300" /><path d="M4 8h8" stroke="#333" strokeWidth="1.400" /></Icon>
        <Range type="range" min={0} max={100} defaultValue={50} />
        <Icon s={11}><circle cx="8" cy="8" r="7" stroke="#555" strokeWidth="1.300" /><path d="M4 8h8M8 4v8" stroke="#333" strokeWidth="1.400" /></Icon>
      </ZoomCell>
    </Status>
    <InnerBar>
      <InnerButton $w={35} aria-label="Start"><Icon s={12}><path d="M0 2.300L6.700 1.300v6H0zM7.600 1.200L16 0v7.300H7.600zM0 8.300h6.700v6.200L0 13.600zM7.600 8.300H16V16l-8.400-1.300z" fill="#0a0a0a" /></Icon></InnerButton>
      <SearchBox><Search s={14} /><SearchInput placeholder="Type here to search" aria-label="Search" /></SearchBox>
      <InnerButton $w={36} aria-label="Cortana"><Icon s={12}><circle cx="8" cy="8" r="6.500" stroke="#111" strokeWidth="2" /></Icon></InnerButton>
      <InnerButton $w={35} aria-label="Task view"><TaskView s={12} /></InnerButton>
      <InnerApps>
        {innerApps.map(([name, icon, run, on]) => (
          <InnerButton key={name} $run={run} $on={on} aria-label={name}>{icon}</InnerButton>
        ))}
      </InnerApps>
      <Tray>
        <TrayButton $w={40} aria-label="People"><PeopleIcon s={11} /></TrayButton>
        <TrayButton $w={66}>
          <Icon s={17}><path d="M4 13c-4 0-4-5-1-5 0-5 7-6 8-2 5-1 6 7 0 7z" fill="#cfe6f4" /><path d="M9 4c3-1 5 2 4 4 3 1 2 5-2 5" stroke="#86c3e2" strokeWidth="1.500" /></Icon>
          <Temp>24°C</Temp>
        </TrayButton>
        <TrayButton $w={19} aria-label="Hidden icons"><Icon s={9} vb="0 0 9 9"><path d="M.5 6.500l4-4 4 4" stroke="#222" /></Icon></TrayButton>
        <TrayButton $w={17} aria-label="Meet now"><Icon s={11}><path d="M2 4h8v8H2zM10 7l4-2v6l-4-2M3 1.500h7M3 14.500h7" stroke="#222" strokeWidth="1.500" /></Icon></TrayButton>
        <TrayButton $w={17} aria-label="Microphone"><Icon s={12}><rect x="5" y="1" width="6" height="9" rx="2" fill="#000" /><path d="M3 7v3c1 3 9 3 10 0V7M8 12v3M5 15h6" stroke="#000" strokeWidth="1.300" /></Icon></TrayButton>
        <TrayButton $w={18} aria-label="Volume"><Speaker s={13} /></TrayButton>
        <TrayButton $w={18} aria-label="Battery"><Battery s={12} /></TrayButton>
        <TrayButton $w={19} aria-label="Network"><Icon s={11}><path d="M1 14C1 7 6 2 14 2M5 14c0-5 4-8 9-8M9 14c0-3 2-4 5-4" stroke="#333" strokeWidth="1.300" /><circle cx="13" cy="13.500" r="1.500" fill="#333" /></Icon></TrayButton>
        <TrayButton $w={19} aria-label="Ink workspace"><Icon s={13}><path d="M6 12l6-10 2 1.500-5 9.500zM1 10c1-3 5-1 3 1s-3 4 1 3M10 11c3-3 5-4 3-6" stroke="#111" strokeWidth="1.100" /></Icon></TrayButton>
        <InnerClock>07:28 PM<br />24/01/2022</InnerClock>
        <TrayButton $w={26} aria-label="Notifications"><Badged><Note s={12} line="#d4d9ea" /><Count>5</Count></Badged></TrayButton>
        <ShowDesktop $l={7} aria-label="Show desktop" />
      </Tray>
    </InnerBar>
  </Shared>
);

const MeetingBar = () => (
  <Meeting>
    <MeetingGroup>
      <MuteEdge>Unmute</MuteEdge>
      <Caret $l={13} aria-label="Audio options"><Chevron s={8} c="#b9b9b9" /></Caret>
      <MeetingButton $w={67} $l={23}>
        <MeetingIcon><Icon s={26} h={24} vb="0 0 26 24"><rect x="1" y="5" width="17" height="14" rx="3" fill="#a9a9a9" /><path d="M19 10l5-4v12l-5-4z" fill="#a9a9a9" /><path d="M2 22L24 1" stroke="#1a1a1a" strokeWidth="4" /><path d="M2 23L24 1" stroke="#e0524f" strokeWidth="1.500" /></Icon></MeetingIcon>
        Start Video
      </MeetingButton>
      <Caret $l={0} aria-label="Video options"><Chevron s={8} c="#b9b9b9" /></Caret>
    </MeetingGroup>
    <MeetingGroup $center>
      <MeetingButton $w={74}>
        <MeetingIcon><Icon s={25} h={18} vb="0 0 25 18"><g fill="#a9a9a9"><circle cx="8" cy="4.500" r="4" /><path d="M.5 17.500v-3c0-6 15-6 15 0v3z" /><circle cx="18" cy="6" r="3.500" /><path d="M17 17.500v-3c0-1.500-.5-2.500-1.500-3.500 4-1.500 9 0 9 3.500v3z" /></g></Icon><People>13</People></MeetingIcon>
        Participants
      </MeetingButton>
      <Caret $l={12} aria-label="Participant options"><Chevron s={8} c="#b9b9b9" /></Caret>
      <MeetingButton $w={72} $l={12}>
        <MeetingIcon><Icon s={20} h={19} vb="0 0 20 19"><path d="M3 0h14q3 0 3 3v9q0 3-3 3H9l-4.500 4V15H3q-3 0-3-3V3q0-3 3-3z" fill="#a9a9a9" /></Icon></MeetingIcon>
        Chat
      </MeetingButton>
      <MeetingButton $w={104} $share>
        <MeetingIcon><Icon s={24} h={18} vb="0 0 24 18"><rect width="24" height="18" rx="3" fill="#23d959" /><path d="M12 14V5M8 8.500L12 4.500l4 4" stroke="#111" strokeWidth="2" /></Icon></MeetingIcon>
        Share Screen
      </MeetingButton>
      <MeetingButton $w={74}>
        <MeetingIcon><Icon s={22} vb="0 0 22 22"><circle cx="10" cy="12.500" r="9" fill="#a9a9a9" /><circle cx="7" cy="10.500" r="1.300" fill="#1a1a1a" /><circle cx="13" cy="10.500" r="1.300" fill="#1a1a1a" /><path d="M6 14.500c1.500 3 6.500 3 8 0" stroke="#1a1a1a" strokeWidth="1.500" /><path d="M18 0v8M14 4h8" stroke="#1a1a1a" strokeWidth="5" /><path d="M18 1v6M15 4h6" stroke="#b9b9b9" strokeWidth="1.300" /></Icon></MeetingIcon>
        Reactions
      </MeetingButton>
    </MeetingGroup>
    <MeetingGroup $end><Leave>Leave</Leave></MeetingGroup>
  </Meeting>
);

const HostTaskbar = () => (
  <HostBar>
    <HostButton $first aria-label="Search"><Search s={17} /></HostButton>
    <HostButton aria-label="Task view"><TaskView s={17} /></HostButton>
    {hostApps.map(([name, icon, st]) => (
      <HostButton key={name} $run={st.run} $many={st.many} $on={st.on} aria-label={name}>{icon}</HostButton>
    ))}
    <Tray>
      <TrayButton $w={48} aria-label="People"><PeopleIcon s={16} /></TrayButton>
      <TrayButton $w={24} aria-label="Hidden icons"><Icon s={13}><path d="M1 12l7-7 7 7" stroke="#fff" strokeWidth="1.500" /></Icon></TrayButton>
      <TrayButton $w={24} aria-label="Network"><Icon s={17}><path d="M5 2.500h10v8H5M1 1.500h4v4H1zM3 5.500V14h3M10 10.500v4M7 14.500h6" stroke="#fff" /></Icon></TrayButton>
      <TrayButton $w={24} aria-label="Battery"><Battery s={17} /></TrayButton>
      <TrayButton $w={24} aria-label="Volume"><Speaker s={17} /></TrayButton>
      <TrayButton $w={32} aria-label="Keyboard"><Icon s={23} h={13} vb="0 0 23 13"><path d="M.5.5h22v12H.5z" stroke="#fff" /><path d="M3 4.500h17M3 7h17" stroke="#fff" strokeDasharray="1.500 1" /><path d="M6 9.500h11" stroke="#fff" /></Icon></TrayButton>
      <HostClock>7:28 PM<br />1/24/2022</HostClock>
      <TrayButton $w={40} aria-label="Notifications"><Badged><Note s={16} line="#111" /><Count $dark>4</Count></Badged></TrayButton>
      <ShowDesktop $l={9} aria-label="Show desktop" />
    </Tray>
  </HostBar>
);

export default function App() {
  return (
    <Desktop>
      <GlobalStyle />
      <Screen>
        <Stage>
          <Recording><RecordingMark />Recording</Recording>
          <PaintWindow />
        </Stage>
        <MeetingBar />
        <HostTaskbar />
      </Screen>
    </Desktop>
  );
}
